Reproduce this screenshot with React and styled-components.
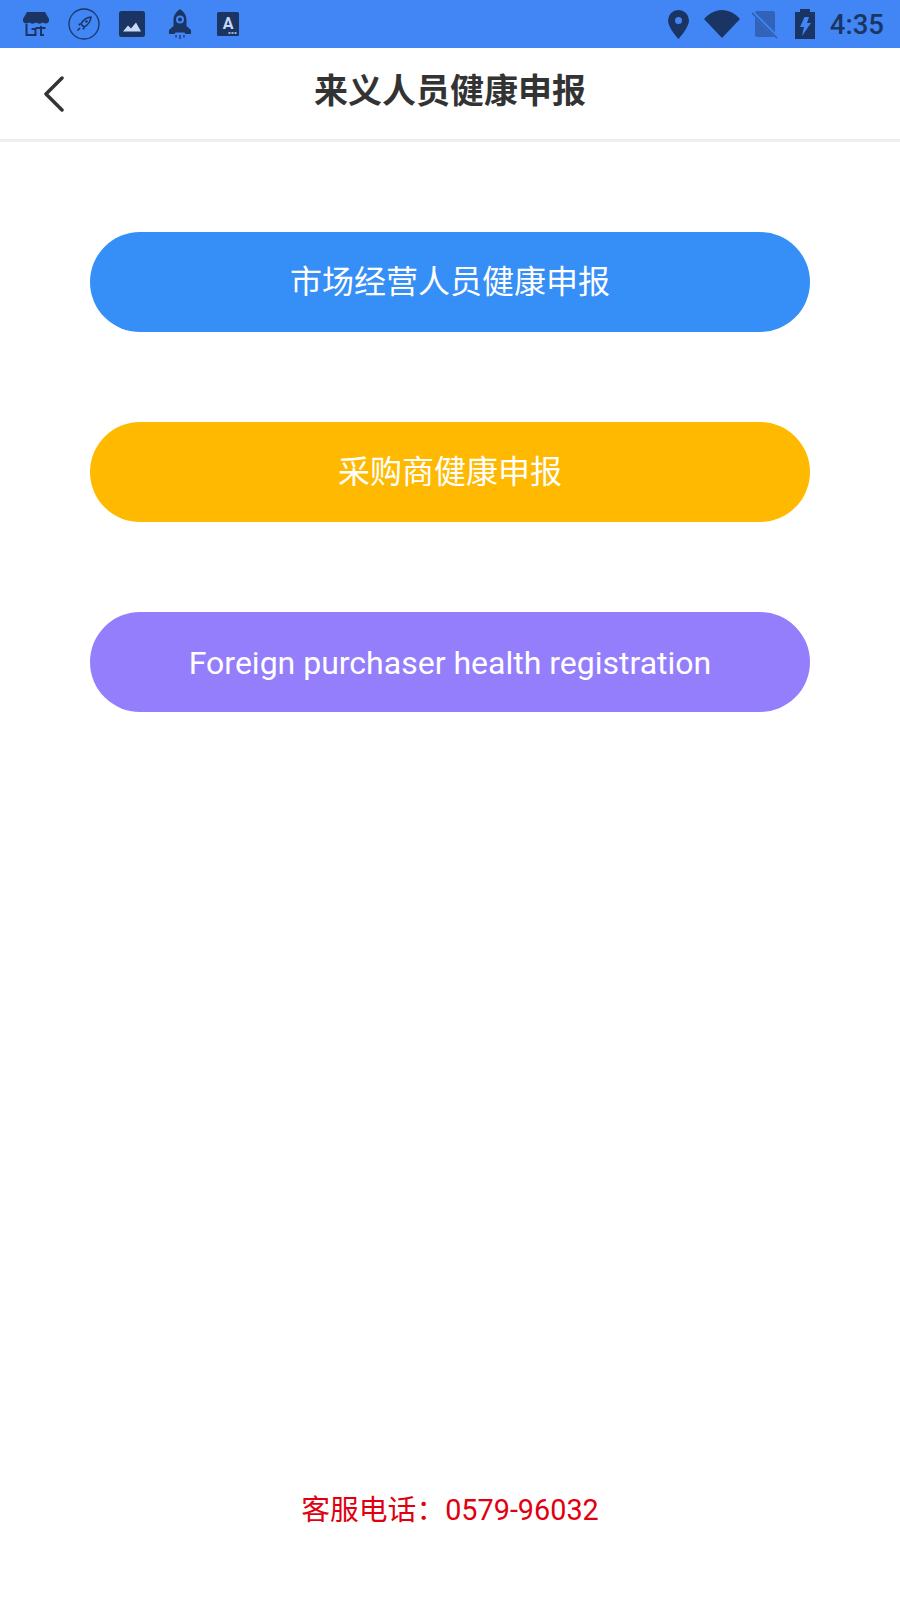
import React from "react"
import styled, { createGlobalStyle } from "styled-components"

const GlobalStyle = createGlobalStyle`
  html, body {
    margin: 0;
    padding: 0;
    background: #fff;
  }
`

const Page = styled.div`
  width: 900px;
  height: 1600px;
  display: flex;
  flex-direction: column;
  background: #fff;
  font-family: Roboto, "Noto Sans CJK SC", sans-serif;
`

const StatusBar = styled.div`
  height: 48px;
  flex: none;
  background: #4285f4;
  display: flex;
  align-items: center;
  justify-content: space-between;
  padding: 0 16px 0 12px;
  color: #1a3563;
`

const NotifyIcons = styled.div`
  display: flex;
  align-items: center;
`

const NotifySlot = styled.span`
  width: 48px;
  display: flex;
  justify-content: center;
`

const SystemIcons = styled.div`
  display: flex;
  align-items: center;
  gap: 15px;
`

const Clock = styled.span`
  font-size: 27.5px;
  font-weight: 500;
  color: #1a3563;
`

const Header = styled.div`
  height: 94px;
  flex: none;
  position: relative;
  display: flex;
  align-items: center;
  justify-content: center;
  padding-bottom: 11px;
  box-sizing: border-box;
  border-bottom: 3px solid #eeeef0;
`

const BackIcon = styled.svg`
  position: absolute;
  left: 42px;
  top: 28px;
`

const Title = styled.h1`
  margin: 0;
  font-size: 34px;
  font-weight: 700;
  color: #333;
`

const Actions = styled.div`
  display: flex;
  flex-direction: column;
  gap: 90px;
  padding: 90px 90px 0;
`

const Action = styled.button`
  height: 100px;
  border: none;
  border-radius: 50px;
  background: ${(p) => p.$color};
  color: #fff;
  font-family: inherit;
  font-size: 32px;
  padding: ${(p) => (p.$latin ? "2px 0 0" : "0 0 6px")};
`

const Footer = styled.div`
  margin-top: auto;
  padding-bottom: 72px;
  text-align: center;
  font-size: 28.8px;
  color: #e0000f;
`

const LIGHT = "#c8d9f7"

const StoreIcon = () => (
  <svg width="26" height="25" viewBox="0 0 26 25" fill="none">
    <path
      d="M4 0h18l4 7v2c-1 3-4 3-6 1.500-2 1.500-5 1.500-7 0-2 1.500-5 1.500-7 0-2 1.500-5 1.500-6-1.500V7z"
      fill="currentColor"
    />
    <path
      d="M3.500 12v11h9v-6h-4M12.500 16h10M18 14v9h3"
      stroke="currentColor"
      strokeWidth="2"
    />
  </svg>
)

const CompassIcon = () => (
  <svg width="32" height="32" viewBox="0 0 32 32" fill="none">
    <circle cx="16" cy="16" r="15" stroke="currentColor" strokeWidth="1.3" />
    <path d="M23 9c-5 .5-8 3-10 7l3 3c4-2 6.500-5 7-10z" stroke="currentColor" strokeWidth="1.500" />
    <path d="M13 15l-3 1 1.500 2zM17 19l-1 3-2-1.500z" fill="currentColor" />
    <path d="M12 20l-2.500 2.500" stroke="currentColor" strokeWidth="1.600" />
    <circle cx="18.500" cy="13.500" r="1.200" fill="currentColor" />
  </svg>
)

const PictureIcon = () => (
  <svg width="26" height="26" viewBox="0 0 26 26">
    <rect width="26" height="26" rx="2.500" fill="currentColor" />
    <path d="M4 20.500l5-6 3 3 5-6 5 9z" fill={LIGHT} />
  </svg>
)

const RocketIcon = () => (
  <svg width="24" height="30" viewBox="0 0 24 30">
    <path
      d="M12 0c4 3 6.500 6.500 6.500 11v6l4.500 4v4h-5.500l-1-1.500h-9L6.500 25H1v-4l4.500-4v-6C5.500 6.500 8 3 12 0z"
      fill="currentColor"
    />
    <circle cx="12" cy="10.500" r="4" fill="#4285f4" />
    <circle cx="12" cy="10.500" r="2" fill="currentColor" />
    <path d="M8 26v2.500M12 26v4M16 26v2.500" stroke="currentColor" strokeWidth="1.300" />
  </svg>
)

const LetterIcon = () => (
  <svg width="22" height="24" viewBox="0 0 22 24">
    <rect width="22" height="24" rx="1.500" fill="currentColor" />
    <text x="11" y="17" textAnchor="middle" fontFamily="Roboto, sans-serif" fontWeight="700" fontSize="16" fill={LIGHT}>
      A
    </text>
    <path d="M11.500 21h2M14.500 21h2M17.500 21h2" stroke={LIGHT} strokeWidth="1.400" />
  </svg>
)

const PinIcon = () => (
  <svg width="21" height="29" viewBox="0 0 21 29">
    <path
      fillRule="evenodd"
      d="M10.500 0a10.500 10.500 0 0 1 10.500 10.500c0 7-10.500 18.500-10.500 18.500S0 17.500 0 10.500A10.500 10.500 0 0 1 10.500 0zm0 7a3.500 3.500 0 1 0 0 7 3.500 3.500 0 0 0 0-7z"
      fill="currentColor"
    />
  </svg>
)

const WifiIcon = () => (
  <svg width="36" height="28" viewBox="0 0 36 28">
    <path d="M0 9C5 3.500 11 0 18 0s13 3.500 18 9L18 28z" fill="currentColor" />
  </svg>
)

const NoSimIcon = () => (
  <svg width="25" height="29" viewBox="0 0 25 29" overflow="visible">
    <rect x="0" y="1" width="20" height="26" rx="2.500" fill="currentColor" opacity="0.42" />
    <path d="M-3 2l25 25" stroke="#4285f4" strokeWidth="3.500" />
    <path d="M-3 3l25 25" stroke="currentColor" strokeWidth="1.400" opacity="0.5" />
  </svg>
)

const BatteryIcon = () => (
  <svg width="20" height="30" viewBox="0 0 20 30">
    <path
      fillRule="evenodd"
      d="M5 0h10v3h5v27H0V3h5zM9.500 8h4.500l-2 6h4L7 27l2-9H5z"
      fill="currentColor"
    />
  </svg>
)

const App = () => {
  return (
    <Page>
      <GlobalStyle />
      <StatusBar>
        <NotifyIcons>
          <NotifySlot><StoreIcon /></NotifySlot>
          <NotifySlot><CompassIcon /></NotifySlot>
          <NotifySlot><PictureIcon /></NotifySlot>
          <NotifySlot><RocketIcon /></NotifySlot>
          <NotifySlot><LetterIcon /></NotifySlot>
        </NotifyIcons>
        <SystemIcons>
          <PinIcon />
          <WifiIcon />
          <NoSimIcon />
          <BatteryIcon />
          <Clock>4:35</Clock>
        </SystemIcons>
      </StatusBar>
      <Header>
        <BackIcon width="24" height="36" viewBox="0 0 24 36" fill="none">
          <path d="M20 2L4 18l16 16" stroke="#333" strokeWidth="3.500" strokeLinecap="round" strokeLinejoin="round" />
        </BackIcon>
        <Title>来义人员健康申报</Title>
      </Header>
      <Actions>
        <Action $color="#368ef7">市场经营人员健康申报</Action>
        <Action $color="#ffb900">采购商健康申报</Action>
        <Action $color="#947efc" $latin>Foreign purchaser health registration</Action>
      </Actions>
      <Footer>客服电话：0579-96032</Footer>
    </Page>
  )
}

export default App
